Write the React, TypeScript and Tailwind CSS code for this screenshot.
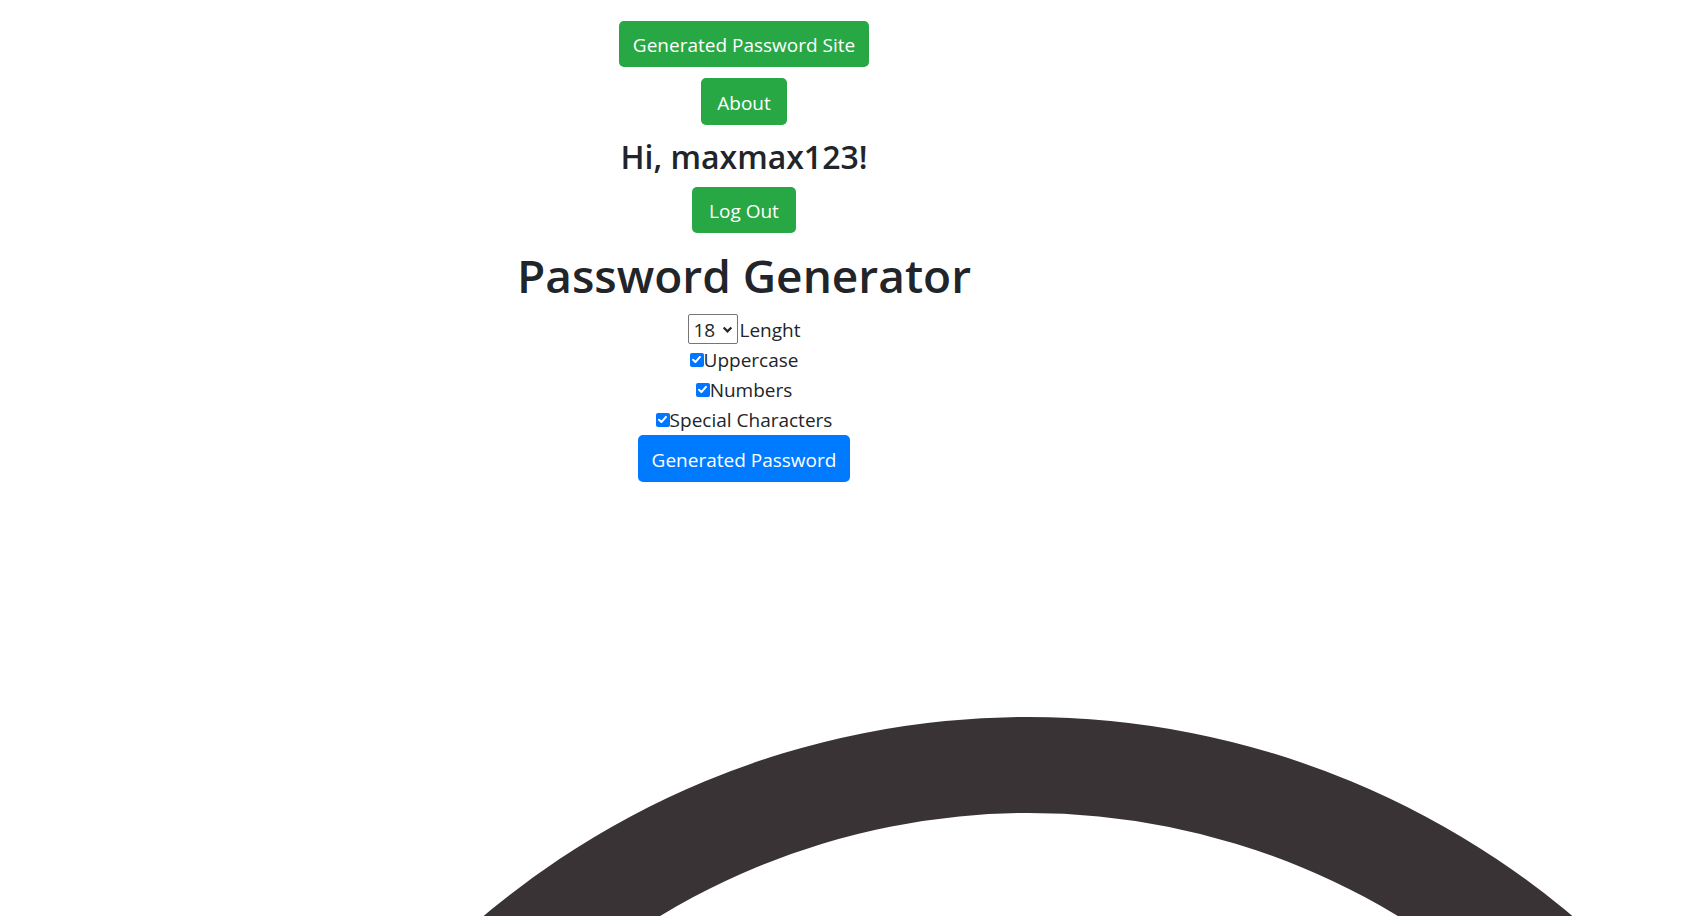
import React, { useState } from "react";

function GreenButton({ children, className }: { children: React.ReactNode; className?: string }) {
  return (
    <button
      className={
        "h-[46px] px-4 pt-[3px] rounded-[5px] bg-[#28a745] text-white text-[19px] leading-none whitespace-nowrap flex items-center justify-center " +
        (className ?? "")
      }
    >
      {children}
    </button>
  );
}

function CheckRow({ label, checked, onToggle }: { label: string; checked: boolean; onToggle: () => void }) {
  return (
    <label className="h-[30px] pt-[3px] flex items-center text-[19px] whitespace-nowrap cursor-pointer">
      <span
        onClick={onToggle}
        className={
          "w-[14px] h-[14px] rounded-[2px] flex items-center justify-center mb-[2px] " +
          (checked ? "bg-[#0075ff]" : "border border-[#767676] bg-white")
        }
      >
        {checked && (
          <svg viewBox="0 0 12 12" className="w-[11px] h-[11px]">
            <path d="M2.2 6.3 L4.8 8.8 L9.8 3.2" fill="none" stroke="white" strokeWidth="2.2" strokeLinecap="round" strokeLinejoin="round" />
          </svg>
        )}
      </span>
      <span>{label}</span>
    </label>
  );
}

function Ring() {
  return (
    <svg viewBox="0 716 1702 200" className="block w-[1702px] h-[200px] mt-[234px]">
      <path
        fillRule="evenodd"
        fill="#3a3335"
        d="M184 1561 a844 844 0 1 0 1688 0 a844 844 0 1 0 -1688 0 Z M317 1525 a712 712 0 1 0 1424 0 a712 712 0 1 0 -1424 0 Z"
      />
    </svg>
  );
}

export default function App() {
  const [opts, setOpts] = useState({ upper: true, numbers: true, special: true });

  return (
    <div className="min-h-screen bg-white overflow-hidden font-['Open_Sans',sans-serif] text-[#212529]">
      <div className="w-[1488px] flex flex-col items-center pt-[21px]">
        <GreenButton className="w-[250px]">Generated Password Site</GreenButton>
        <GreenButton className="w-[86px] h-[47px] mt-[11px]">About</GreenButton>
        <h2 className="h-[62px] pt-[2px] flex items-center text-[32px] font-semibold whitespace-nowrap">Hi, maxmax123!</h2>
        <GreenButton className="w-[104px]">Log Out</GreenButton>
        <h1 className="h-[81px] flex items-center pt-[3px] text-[46px] font-semibold whitespace-nowrap">Password Generator</h1>
        <div className="h-[30px] flex items-center text-[19px] whitespace-nowrap">
          <div className="w-[50px] h-[30px] border border-[#767676] rounded-[2px] flex items-center justify-between pt-[2px] pl-[5px] pr-[4px]">
            <span>18</span>
            <svg viewBox="0 0 10 10" className="w-[11px] h-[11px] -mt-[2px]">
              <path d="M1.5 3.2 L5 6.7 L8.5 3.2" fill="none" stroke="#212529" strokeWidth="2" />
            </svg>
          </div>
          <span className="ml-[2px] pt-[3px]">Lenght</span>
        </div>
        <CheckRow label="Uppercase" checked={opts.upper} onToggle={() => setOpts({ ...opts, upper: !opts.upper })} />
        <CheckRow label="Numbers" checked={opts.numbers} onToggle={() => setOpts({ ...opts, numbers: !opts.numbers })} />
        <CheckRow
          label="Special Characters"
          checked={opts.special}
          onToggle={() => setOpts({ ...opts, special: !opts.special })}
        />
        <button className="mt-[1px] pt-[3px] w-[212px] h-[47px] rounded-[5px] bg-[#007bff] text-white text-[19px] leading-none whitespace-nowrap flex items-center justify-center">
          Generated Password
        </button>
      </div>
      <Ring />
    </div>
  );
}
